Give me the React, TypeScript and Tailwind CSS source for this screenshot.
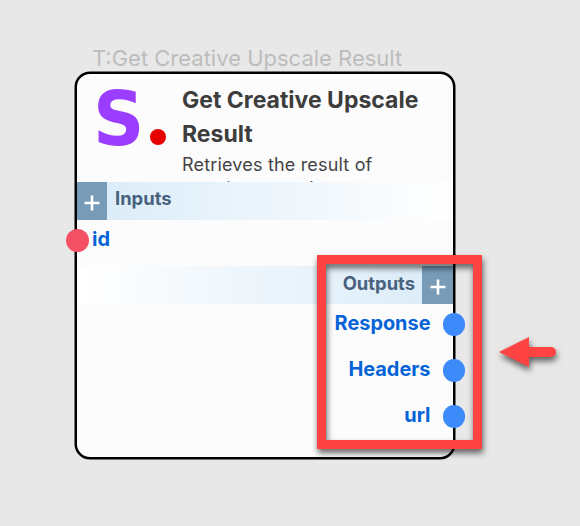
import type { ReactNode } from "react";

function PlusButton({ className }: { className: string }) {
  return (
    <div className={`flex h-full shrink-0 items-center justify-center bg-[#789bb7] ${className}`}>
      <svg width="16" height="16" viewBox="0 0 16 16" className="mt-1">
        <path d="M8 0.5V15.5M0.5 8H15.5" stroke="#fff" strokeWidth="2.6" />
      </svg>
    </div>
  );
}

function Output({ children, className }: { children: ReactNode; className: string }) {
  return (
    <div className={`flex items-center justify-end ${className}`}>
      <span className="-mt-[3px] mr-[12.5px] text-[19.9px] leading-6 font-bold text-[#0563d8]">{children}</span>
      <span className="-mr-3 h-[23px] w-[22px] rounded-full bg-[#3d8bfb]" />
    </div>
  );
}

export default function App() {
  return (
    <main className="relative h-[526px] w-[580px] overflow-hidden bg-[#e8e8e8] pt-[45px] pl-[75px] font-['Inter','Liberation_Sans',sans-serif]">
      <div className="h-[27px] pl-[17px] text-[22px] leading-[27px] whitespace-nowrap text-[#bdbdbd]">
        T:Get Creative Upscale Result
      </div>
      <section className="h-[387px] w-[380px] rounded-[15px] border-2 border-black bg-[#fcfcfc] shadow-[0_0_0_0.5px_#000]">
        <header className="flex h-[108px] overflow-hidden">
          <div className="flex w-[105px] shrink-0 pl-[16px]">
            <span className="w-[57px] origin-left scale-x-95 pt-px font-['DejaVu_Sans',sans-serif] text-[75px] leading-[88px] font-bold text-[#9b3dff]">
              S
            </span>
            <span className="mt-[55px] h-4 w-4 rounded-full bg-[#e60000]" />
          </div>
          <div className="pt-[9px]">
            <h1 className="w-[250px] text-[23px] leading-[34px] font-bold text-[#3d3d3d]">
              Get Creative Upscale Result
            </h1>
            <p className="mt-[1.5px] w-[220px] text-[18px] leading-[24px] tracking-[0.18px] text-[#444]">
              Retrieves the result of creative upscale
            </p>
          </div>
        </header>
        <div className="flex h-[38px] bg-linear-to-r from-[#d9ebf8] to-white">
          <PlusButton className="w-[30px]" />
          <span className="pl-[8px] text-[18.4px] leading-[33px] font-bold text-[#48627e]">Inputs</span>
        </div>
        <div className="flex h-[46px] items-start pt-[9px]">
          <span className="-ml-[11.5px] h-[23px] w-[23.5px] rounded-full bg-[#f45063]" />
          <span className="ml-[3px] text-[20px] leading-5 font-bold text-[#0563d8]">id</span>
        </div>
        <div className="flex h-[38px] justify-end bg-linear-to-l from-[#d9ebf8] to-white">
          <span className="pr-[7px] text-[18.4px] leading-[35px] font-bold text-[#48627e]">Outputs</span>
          <PlusButton className="w-[31px]" />
        </div>
        <Output className="h-[41px]">Response</Output>
        <Output className="h-[51px]">Headers</Output>
        <Output className="h-[41px]">url</Output>
      </section>
      <div className="absolute top-[255px] left-[317px] h-[194px] w-[165px] border-9 border-[#ff4343] drop-shadow-[1px_4px_3px_rgba(0,0,0,0.6)]" />
      <svg
        className="absolute top-[330px] left-[494px] drop-shadow-[1px_4px_3px_rgba(0,0,0,0.6)]"
        width="70"
        height="46"
        viewBox="0 0 70 46"
      >
        <path d="M5 22L35 7V17H57A5 5 0 0 1 57 27H35V37Z" fill="#ff4343" />
      </svg>
    </main>
  );
}
